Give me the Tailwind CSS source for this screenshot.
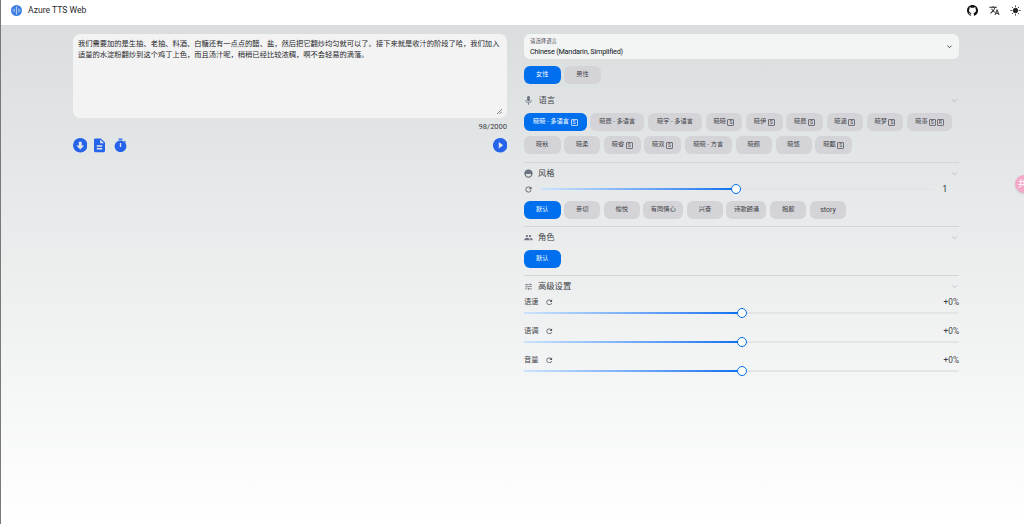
<!DOCTYPE html>
<html lang="zh">
<head>
<meta charset="UTF-8">
<title>Azure TTS Web</title>
<script src="https://cdn.jsdelivr.net/npm/@tailwindcss/browser@4"></script>
</head>
<body class="bg-white text-[#11181c] font-['Roboto','Noto_Sans_CJK_SC',sans-serif] overflow-hidden">
<div class="h-[524px] w-[1024px] flex flex-col border-l border-[#77797a] bg-gradient-to-b from-[#d8dcdd] to-white relative overflow-hidden">
  <header class="h-[25px] shrink-0 bg-white flex items-center justify-between pl-[10px] pr-[3px] pb-[4px]">
    <div class="flex items-center gap-[6px]">
      <svg class="w-[11px] h-[11px]" viewBox="0 0 24 24"><circle cx="12" cy="12" r="12" fill="#3f7fe0"/><path d="M12 3v18M7 8v8M17 8v8M4 11v2M20 11v2" stroke="#b9d0f2" stroke-width="2"/></svg>
      <span class="text-[8.600px] leading-none text-[#27272a]">Azure TTS Web</span>
    </div>
    <div class="flex items-center gap-[10.500px]">
      <svg class="w-[11px] h-[11px]" viewBox="0 0 16 16" fill="#111"><path d="M8 0C3.580 0 0 3.580 0 8c0 3.540 2.290 6.530 5.470 7.590.4.070.55-.17.55-.38 0-.19-.01-.82-.01-1.490-2.010.37-2.530-.49-2.690-.94-.09-.23-.48-.94-.82-1.130-.28-.15-.68-.52-.01-.53.63-.01 1.080.58 1.230.82.72 1.210 1.870.87 2.330.66.070-.52.28-.87.51-1.070-1.780-.2-3.640-.89-3.640-3.950 0-.87.31-1.590.82-2.150-.08-.2-.36-1.020.08-2.120 0 0 .67-.21 2.200.82.64-.18 1.320-.27 2-.27s1.360.09 2 .27c1.530-1.040 2.200-.82 2.200-.82.44 1.100.16 1.920.08 2.120.51.56.82 1.270.82 2.150 0 3.070-1.870 3.750-3.650 3.950.29.25.54.73.54 1.480 0 1.070-.01 1.930-.01 2.200 0 .21.15.46.55.38A8.010 8.010 0 0016 8c0-4.420-3.580-8-8-8z"/></svg>
      <svg class="w-[11px] h-[11px]" viewBox="0 0 24 24" fill="#222"><path d="M12.870 15.070l-2.540-2.510.03-.03c1.740-1.940 2.980-4.170 3.710-6.530H17V4h-7V2H8v2H1v1.990h11.170C11.500 7.920 10.440 9.750 9 11.350 8.070 10.320 7.300 9.190 6.690 8h-2c.73 1.630 1.730 3.170 2.980 4.560l-5.090 5.020L4 19l5-5 3.110 3.110.76-2.040zM18.500 10h-2L12 22h2l1.120-3h4.750L21 22h2l-4.500-12zm-2.620 7l1.620-4.330L19.120 17h-3.240z"/></svg>
      <svg class="w-[11px] h-[11px]" viewBox="0 0 24 24" fill="#222" stroke="#222" stroke-width="2"><circle cx="12" cy="12" r="5"/><path d="M12 1v3M12 20v3M1 12h3M20 12h3M4.200 4.200l2.100 2.100M17.700 17.700l2.100 2.100M4.200 19.800l2.100-2.100M17.700 6.300l2.100-2.100"/></svg>
    </div>
  </header>

  <main class="grid grid-cols-[434.5px_435px] gap-x-[17px] pl-[71.5px] pt-[9px]">
    <section>
      <div class="h-[84px] rounded-[7px] bg-[#f3f3f4] px-[5.500px] py-[4px] relative text-[7.280px] leading-[11px] text-[#27272a]">
        我们需要加的是生抽、老抽、料酒、白糖还有一点点的醋、盐，然后把它翻炒均匀就可以了。接下来就是收汁的阶段了哈，我们加入适量的水淀粉翻炒到这个鸡丁上色，而且汤汁呢，稍稍已经比较浓稠，啊不会轻易的滴落。
        <svg class="absolute right-[5px] bottom-[4px] w-[5px] h-[5px]" viewBox="0 0 5 5" stroke="#555" stroke-width="0.7"><path d="M0 5L5 0M2.500 5L5 2.500"/></svg>
      </div>
      <div class="text-right text-[7.500px] leading-[10px] mt-[4px] text-[#3f3f46]">98/2000</div>
      <div class="flex items-center justify-between mt-[6px]">
        <div class="flex items-center">
          <svg class="w-[14.500px] h-[14.500px]" viewBox="2 2 20 20" fill="#2563eb"><path d="M12 2a10 10 0 100 20 10 10 0 000-20zm0 16l-5.500-5.500H10V7h4v5.500h3.500L12 18z"/></svg>
          <svg class="w-[11px] h-[14.500px] ml-[7px]" viewBox="4 2 16 20" fill="#2563eb"><path d="M14 2H6c-1.100 0-1.990.9-1.990 2L4 20c0 1.100.89 2 1.990 2H18c1.100 0 2-.9 2-2V8l-6-6zm2 16H8v-2h8v2zm0-4H8v-2h8v2zm-3-5V3.500L18.500 9H13z"/></svg>
          <svg class="w-[13px] h-[14.500px] ml-[8.500px]" viewBox="2 1 20 21" fill="#2563eb" fill-rule="evenodd"><path d="M15 1H9v2h6V1zM19.030 7.390l1.420-1.420c-.43-.51-.9-.99-1.410-1.410l-1.420 1.420C16.070 4.740 14.120 4 12 4c-4.970 0-9 4.030-9 9s4.020 9 9 9 9-4.030 9-9c0-2.120-.74-4.070-1.970-5.610zM13 14h-2V8h2v6z"/></svg>
        </div>
        <svg class="w-[14.500px] h-[14.500px]" viewBox="2 2 20 20" fill="#2563eb"><path d="M12 2C6.480 2 2 6.480 2 12s4.480 10 10 10 10-4.480 10-10S17.520 2 12 2zm-2 14.500v-9l6 4.500-6 4.500z"/></svg>
      </div>
    </section>

    <section>
      <div class="h-[25px] rounded-[6px] bg-[#f3f4f4] px-[6px] pt-[3px] relative">
        <div class="text-[5.400px] leading-[8px] text-[#52525b]">请选择语言</div>
        <div class="text-[7.280px] tracking-[-0.2px] leading-[11px] mt-[1px]">Chinese (Mandarin, Simplified)</div>
        <svg class="absolute right-[6px] top-[9px] w-[7px] h-[7px]" viewBox="0 0 24 24" fill="none" stroke="#333" stroke-width="3"><path d="M5 9l7 7 7-7"/></svg>
      </div>

      <div class="flex gap-[3.750px] mt-[7px] text-[6.240px]">
        <button class="h-[18px] w-[36.500px] rounded-[6px] bg-[#006fee] text-white">女性</button>
        <button class="h-[18px] w-[36.500px] rounded-[6px] bg-[#d4d4d8] text-[#3f3f46]">男性</button>
      </div>

      <div class="flex items-center justify-between h-[12px] mt-[10px] mb-[7px]">
        <div class="flex items-center gap-[5px] text-[8.320px] text-[#3f3f46]">
          <svg class="w-[11px] h-[11px] -ml-[1px]" viewBox="0 0 24 24" fill="#6b7280"><path d="M12 14c1.660 0 2.990-1.340 2.990-3L15 5c0-1.660-1.340-3-3-3S9 3.340 9 5v6c0 1.660 1.340 3 3 3zm5.300-3c0 3-2.540 5.100-5.300 5.100S6.700 14 6.700 11H5c0 3.410 2.720 6.230 6 6.720V21h2v-3.280c3.280-.48 6-3.300 6-6.720h-1.700z"/></svg>
          <span class="-ml-[0.500px]">语言</span>
        </div>
        <svg class="w-[7px] h-[7px] mr-[1px]" viewBox="0 0 24 24" fill="none" stroke="#a1a1aa" stroke-width="2"><path d="M4 8l8 8 8-8"/></svg>
      </div>
      <div class="flex flex-wrap gap-x-[3.750px] gap-y-[5px] text-[6.240px] text-[#3f3f46]">
        <button class="h-[18px] w-[62.500px] rounded-[6px] bg-[#006fee] text-white flex items-center justify-center gap-[1.500px]">晓晓 - 多语言<span class="w-[7px] h-[7px] flex items-center justify-center border-[0.5px] border-white/70 rounded-[1px] text-[5px] leading-none">S</span></button>
        <button class="h-[18px] w-[54px] rounded-[6px] bg-[#d4d4d8]">晓辰 - 多语言</button>
        <button class="h-[18px] w-[54px] rounded-[6px] bg-[#d4d4d8]">晓宇 - 多语言</button>
        <button class="h-[18px] w-[36.500px] rounded-[6px] bg-[#d4d4d8] flex items-center justify-center gap-[1.500px]">晓晓<span class="w-[7px] h-[7px] flex items-center justify-center border-[0.5px] border-[#71717a] rounded-[1px] text-[5px] leading-none">S</span></button>
        <button class="h-[18px] w-[36.500px] rounded-[6px] bg-[#d4d4d8] flex items-center justify-center gap-[1.500px]">晓伊<span class="w-[7px] h-[7px] flex items-center justify-center border-[0.5px] border-[#71717a] rounded-[1px] text-[5px] leading-none">S</span></button>
        <button class="h-[18px] w-[36.500px] rounded-[6px] bg-[#d4d4d8] flex items-center justify-center gap-[1.500px]">晓辰<span class="w-[7px] h-[7px] flex items-center justify-center border-[0.5px] border-[#71717a] rounded-[1px] text-[5px] leading-none">S</span></button>
        <button class="h-[18px] w-[36.500px] rounded-[6px] bg-[#d4d4d8] flex items-center justify-center gap-[1.500px]">晓涵<span class="w-[7px] h-[7px] flex items-center justify-center border-[0.5px] border-[#71717a] rounded-[1px] text-[5px] leading-none">S</span></button>
        <button class="h-[18px] w-[36.500px] rounded-[6px] bg-[#d4d4d8] flex items-center justify-center gap-[1.500px]">晓梦<span class="w-[7px] h-[7px] flex items-center justify-center border-[0.5px] border-[#71717a] rounded-[1px] text-[5px] leading-none">S</span></button>
        <button class="h-[18px] w-[45px] rounded-[6px] bg-[#d4d4d8] flex items-center justify-center gap-[1px]">晓墨<span class="w-[7px] h-[7px] flex items-center justify-center border-[0.5px] border-[#71717a] rounded-[1px] text-[5px] leading-none">S</span><span class="w-[7px] h-[7px] flex items-center justify-center border-[0.5px] border-[#71717a] rounded-[1px] text-[5px] leading-none">R</span></button>
        <button class="h-[18px] w-[36.500px] rounded-[6px] bg-[#d4d4d8]">晓秋</button>
        <button class="h-[18px] w-[36px] rounded-[6px] bg-[#d4d4d8]">晓柔</button>
        <button class="h-[18px] w-[36.500px] rounded-[6px] bg-[#d4d4d8] flex items-center justify-center gap-[1.500px]">晓睿<span class="w-[7px] h-[7px] flex items-center justify-center border-[0.5px] border-[#71717a] rounded-[1px] text-[5px] leading-none">S</span></button>
        <button class="h-[18px] w-[36.500px] rounded-[6px] bg-[#d4d4d8] flex items-center justify-center gap-[1.500px]">晓双<span class="w-[7px] h-[7px] flex items-center justify-center border-[0.5px] border-[#71717a] rounded-[1px] text-[5px] leading-none">S</span></button>
        <button class="h-[18px] w-[47.500px] rounded-[6px] bg-[#d4d4d8]">晓晓 - 方言</button>
        <button class="h-[18px] w-[36px] rounded-[6px] bg-[#d4d4d8]">晓颜</button>
        <button class="h-[18px] w-[36px] rounded-[6px] bg-[#d4d4d8]">晓悠</button>
        <button class="h-[18px] w-[37px] rounded-[6px] bg-[#d4d4d8] flex items-center justify-center gap-[1.500px]">晓甄<span class="w-[7px] h-[7px] flex items-center justify-center border-[0.5px] border-[#71717a] rounded-[1px] text-[5px] leading-none">S</span></button>
      </div>

      <div class="border-t border-[#d4d4d8] mt-[8px] pt-[4px]">
        <div class="flex items-center justify-between h-[12px]">
          <div class="flex items-center gap-[5px] text-[8.320px] text-[#3f3f46]">
            <svg class="w-[9px] h-[9px]" viewBox="0 0 24 24"><circle cx="12" cy="12" r="11" fill="#6b7280"/><path d="M5 13h14c0 4-3 7-7 7s-7-3-7-7z" fill="#e5e7eb"/></svg>
            <span>风格</span>
          </div>
          <svg class="w-[7px] h-[7px] mr-[1px]" viewBox="0 0 24 24" fill="none" stroke="#a1a1aa" stroke-width="2"><path d="M4 8l8 8 8-8"/></svg>
        </div>
        <div class="flex items-center h-[12px] mt-[4px]">
          <svg class="w-[9px] h-[9px] shrink-0" viewBox="0 0 24 24" fill="#52525b"><path d="M17.650 6.350C16.200 4.900 14.210 4 12 4c-4.420 0-7.990 3.580-7.990 8s3.570 8 7.990 8c3.730 0 6.840-2.550 7.730-6h-2.080c-.82 2.330-3.040 4-5.650 4-3.310 0-6-2.690-6-6s2.690-6 6-6c1.660 0 3.140.69 4.220 1.780L13 11h7V4l-2.350 2.350z"/></svg>
          <div class="relative w-[392px] h-[2px] ml-[8px] rounded-full bg-[#e4e4e7]">
            <div class="h-[2px] rounded-full bg-gradient-to-r from-[#cce3fd] to-[#006fee] w-[195px]"></div>
            <div class="absolute left-[190px] -top-[4px] w-[10px] h-[10px] rounded-full bg-white border-[1.500px] border-[#006fee]"></div>
          </div>
          <span class="text-[8.320px] ml-[9.500px] text-[#27272a]">1</span>
        </div>
        <div class="flex gap-[3.750px] mt-[6px] text-[6.240px] text-[#3f3f46]">
          <button class="h-[18px] w-[36.500px] rounded-[6px] bg-[#006fee] text-white">默认</button>
          <button class="h-[18px] w-[36px] rounded-[6px] bg-[#d4d4d8]">亲切</button>
          <button class="h-[18px] w-[35.600px] rounded-[6px] bg-[#d4d4d8]">愉悦</button>
          <button class="h-[18px] w-[40px] rounded-[6px] bg-[#d4d4d8]">有同情心</button>
          <button class="h-[18px] w-[35.600px] rounded-[6px] bg-[#d4d4d8]">兴奋</button>
          <button class="h-[18px] w-[40px] rounded-[6px] bg-[#d4d4d8]">诗歌朗诵</button>
          <button class="h-[18px] w-[36px] rounded-[6px] bg-[#d4d4d8]">抱歉</button>
          <button class="h-[18px] w-[36px] rounded-[6px] bg-[#d4d4d8] text-[7px]">story</button>
        </div>
      </div>

      <div class="border-t border-[#d4d4d8] mt-[7px] pt-[4px]">
        <div class="flex items-center justify-between h-[12px]">
          <div class="flex items-center gap-[5px] text-[8.320px] text-[#3f3f46]">
            <svg class="w-[9px] h-[9px]" viewBox="0 0 24 24" fill="#6b7280"><path d="M16 11c1.660 0 2.990-1.340 2.990-3S17.660 5 16 5c-1.660 0-3 1.340-3 3s1.340 3 3 3zm-8 0c1.660 0 2.990-1.340 2.990-3S9.660 5 8 5C6.340 5 5 6.340 5 8s1.340 3 3 3zm0 2c-2.330 0-7 1.170-7 3.500V19h14v-2.500c0-2.330-4.670-3.500-7-3.500zm8 0c-.29 0-.62.020-.97.050 1.160.84 1.970 1.970 1.970 3.450V19h6v-2.500c0-2.330-4.670-3.500-7-3.500z"/></svg>
            <span>角色</span>
          </div>
          <svg class="w-[7px] h-[7px] mr-[1px]" viewBox="0 0 24 24" fill="none" stroke="#a1a1aa" stroke-width="2"><path d="M4 8l8 8 8-8"/></svg>
        </div>
        <button class="h-[18px] w-[36.500px] rounded-[6px] bg-[#006fee] text-white text-[6.240px] mt-[7px] block">默认</button>
      </div>

      <div class="border-t border-[#d4d4d8] mt-[7px] pt-[4px]">
        <div class="flex items-center justify-between h-[12px]">
          <div class="flex items-center gap-[5px] text-[8.320px] text-[#3f3f46]">
            <svg class="w-[9px] h-[9px]" viewBox="0 0 24 24" fill="#6b7280"><path d="M3 17v2h6v-2H3zM3 5v2h10V5H3zm10 16v-2h8v-2h-8v-2h-2v6h2zM7 9v2H3v2h4v2h2V9H7zm14 4v-2H11v2h10zm-6-4h2V7h4V5h-4V3h-2v6z"/></svg>
            <span>高级设置</span>
          </div>
          <svg class="w-[7px] h-[7px] mr-[1px]" viewBox="0 0 24 24" fill="none" stroke="#a1a1aa" stroke-width="2"><path d="M4 8l8 8 8-8"/></svg>
        </div>
        <div class="flex flex-col gap-[12px] mt-[5px]">
          <div>
            <div class="flex items-center justify-between h-[11px] text-[7.280px] text-[#3f3f46]">
              <div class="flex items-center gap-[6px]"><span>语速</span><svg class="w-[8.500px] h-[8.500px]" viewBox="0 0 24 24" fill="#52525b"><path d="M17.650 6.350C16.200 4.900 14.210 4 12 4c-4.420 0-7.990 3.580-7.990 8s3.570 8 7.990 8c3.730 0 6.840-2.550 7.730-6h-2.080c-.82 2.330-3.040 4-5.650 4-3.310 0-6-2.690-6-6s2.690-6 6-6c1.660 0 3.140.69 4.220 1.780L13 11h7V4l-2.350 2.350z"/></svg></div>
              <span class="text-[8.320px]">+0%</span>
            </div>
            <div class="relative h-[2px] mt-[4px] rounded-full bg-[#e4e4e7]">
              <div class="h-[2px] rounded-full bg-gradient-to-r from-[#cce3fd] to-[#006fee] w-[217px]"></div>
              <div class="absolute left-[212.500px] -top-[4px] w-[10px] h-[10px] rounded-full bg-white border-[1.500px] border-[#006fee]"></div>
            </div>
          </div>
          <div>
            <div class="flex items-center justify-between h-[11px] text-[7.280px] text-[#3f3f46]">
              <div class="flex items-center gap-[6px]"><span>语调</span><svg class="w-[8.500px] h-[8.500px]" viewBox="0 0 24 24" fill="#52525b"><path d="M17.650 6.350C16.200 4.900 14.210 4 12 4c-4.420 0-7.990 3.580-7.990 8s3.570 8 7.990 8c3.730 0 6.840-2.550 7.730-6h-2.080c-.82 2.330-3.040 4-5.650 4-3.310 0-6-2.690-6-6s2.690-6 6-6c1.660 0 3.140.69 4.220 1.780L13 11h7V4l-2.350 2.350z"/></svg></div>
              <span class="text-[8.320px]">+0%</span>
            </div>
            <div class="relative h-[2px] mt-[4px] rounded-full bg-[#e4e4e7]">
              <div class="h-[2px] rounded-full bg-gradient-to-r from-[#cce3fd] to-[#006fee] w-[217px]"></div>
              <div class="absolute left-[212.500px] -top-[4px] w-[10px] h-[10px] rounded-full bg-white border-[1.500px] border-[#006fee]"></div>
            </div>
          </div>
          <div>
            <div class="flex items-center justify-between h-[11px] text-[7.280px] text-[#3f3f46]">
              <div class="flex items-center gap-[6px]"><span>音量</span><svg class="w-[8.500px] h-[8.500px]" viewBox="0 0 24 24" fill="#52525b"><path d="M17.650 6.350C16.200 4.900 14.210 4 12 4c-4.420 0-7.990 3.580-7.990 8s3.570 8 7.990 8c3.730 0 6.840-2.550 7.730-6h-2.080c-.82 2.330-3.040 4-5.650 4-3.310 0-6-2.690-6-6s2.690-6 6-6c1.660 0 3.140.69 4.220 1.780L13 11h7V4l-2.350 2.350z"/></svg></div>
              <span class="text-[8.320px]">+0%</span>
            </div>
            <div class="relative h-[2px] mt-[4px] rounded-full bg-[#e4e4e7]">
              <div class="h-[2px] rounded-full bg-gradient-to-r from-[#cce3fd] to-[#006fee] w-[217px]"></div>
              <div class="absolute left-[212.500px] -top-[4px] w-[10px] h-[10px] rounded-full bg-white border-[1.500px] border-[#006fee]"></div>
            </div>
          </div>
        </div>
      </div>
    </section>
  </main>

  <div class="absolute left-[1014px] top-[175px] w-[18px] h-[18px] rounded-full bg-[#f4a8c8] shadow-sm text-white text-[9px] leading-[18px] pl-[3px]">共</div>
</div>
</body>
</html>
